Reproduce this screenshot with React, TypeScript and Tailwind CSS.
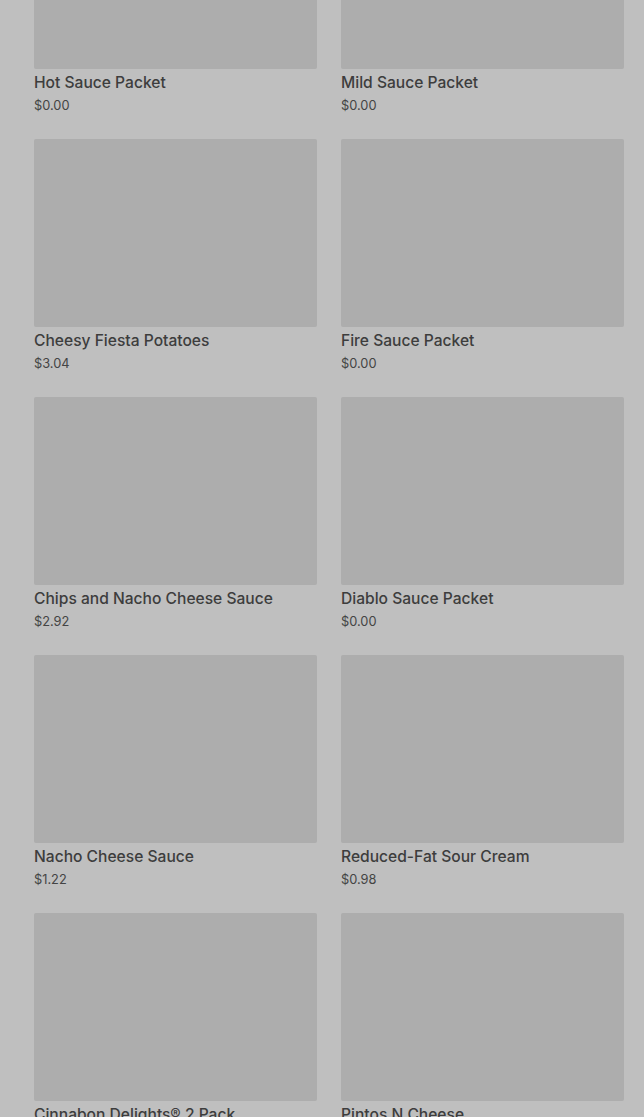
const items = [
  { name: "Hot Sauce Packet", price: "$0.00" },
  { name: "Mild Sauce Packet", price: "$0.00" },
  { name: "Cheesy Fiesta Potatoes", price: "$3.04" },
  { name: "Fire Sauce Packet", price: "$0.00" },
  { name: "Chips and Nacho Cheese Sauce", price: "$2.92" },
  { name: "Diablo Sauce Packet", price: "$0.00" },
  { name: "Nacho Cheese Sauce", price: "$1.22" },
  { name: "Reduced-Fat Sour Cream", price: "$0.98" },
  { name: "Cinnabon Delights® 2 Pack", price: "$2.49" },
  { name: "Pintos N Cheese", price: "$2.19" },
];

function ProductCard({ name, price }: { name: string; price: string }) {
  return (
    <div className="flex flex-col">
      <div className="h-[188px] w-full rounded-[2px] bg-[#adadad]" />
      <div className="mt-[4px] text-[15.6px] leading-[20px] font-medium text-[#3d3d3d]">{name}</div>
      <div className="mt-[4px] text-[12.8px] leading-[18px] text-[#444444]">{price}</div>
    </div>
  );
}

export default function App() {
  return (
    <div
      className="h-[1117px] overflow-hidden bg-[#bfbfbf]"
      style={{ fontFamily: "Inter, 'Noto Sans', sans-serif" }}
    >
      <div className="-mt-[119px] grid grid-cols-2 gap-x-6 gap-y-[24px] pl-[34px] pr-[20px]">
        {items.map((item) => (
          <ProductCard key={item.name} name={item.name} price={item.price} />
        ))}
      </div>
    </div>
  );
}
